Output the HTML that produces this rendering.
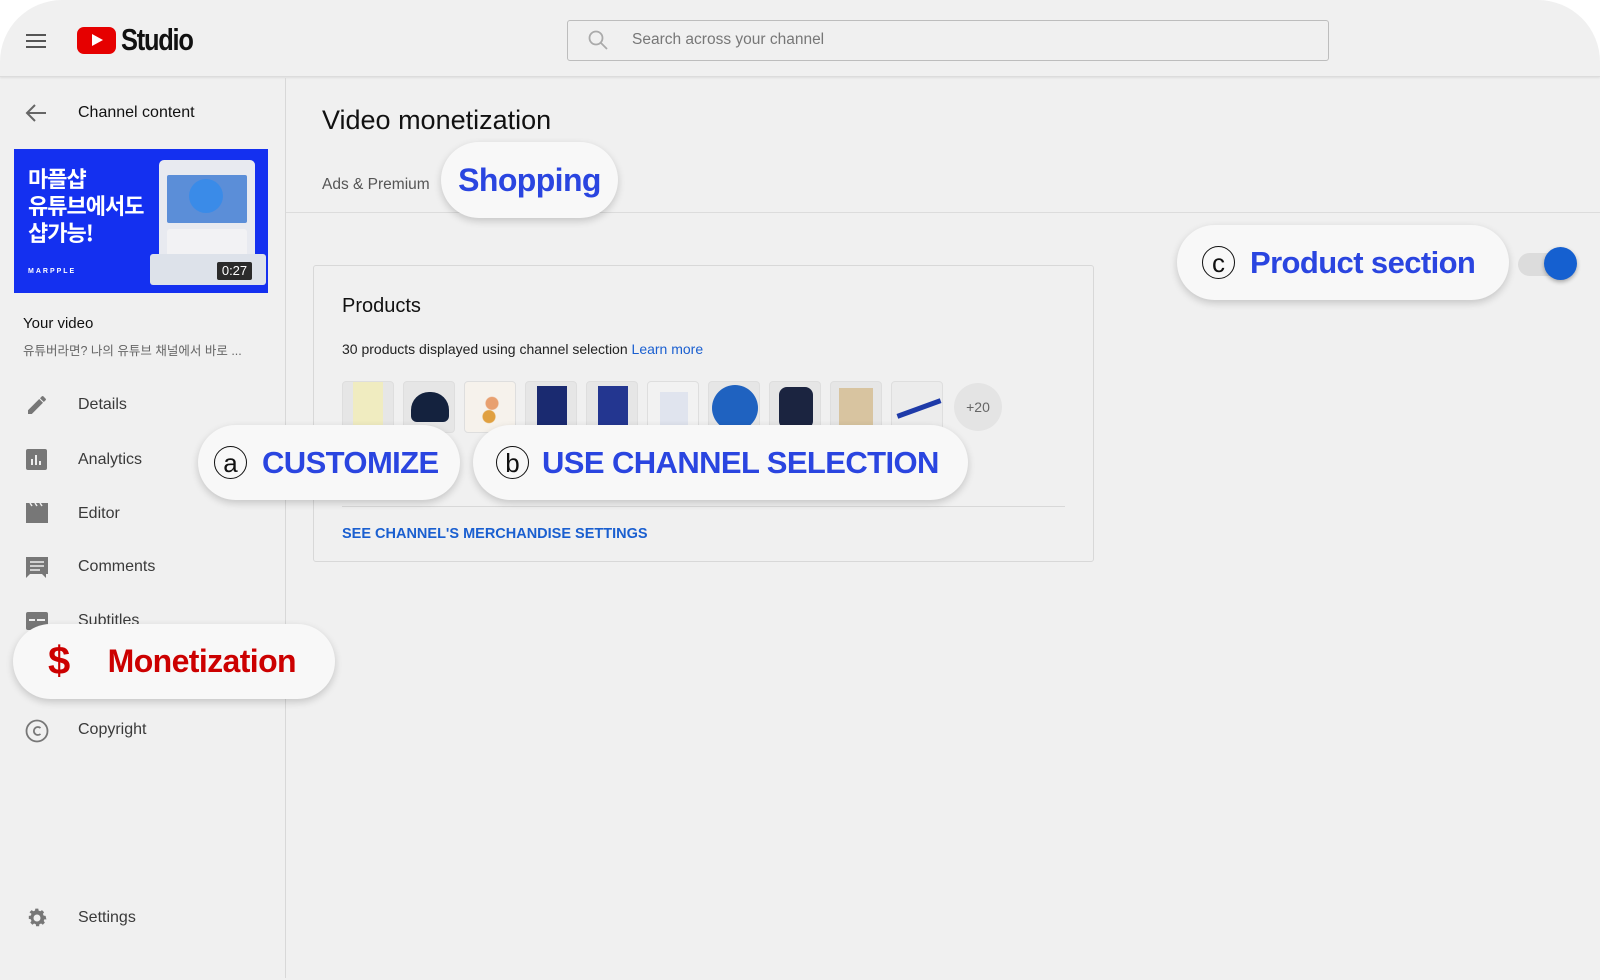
<!DOCTYPE html>
<html><head><meta charset="utf-8"><style>
*{margin:0;padding:0;box-sizing:border-box}
html,body{width:1600px;height:956px;overflow:hidden;background:#fff;font-family:"Liberation Sans","Noto Sans CJK KR",sans-serif}
#app{position:absolute;left:0;top:0;width:1600px;height:980px;background:#f0f0f0;border-radius:62px 62px 0 0;overflow:hidden}
.abs{position:absolute}
.hdr{left:0;top:0;width:1600px;height:77px;border-bottom:1px solid #dcdcdc;box-shadow:0 1px 2px rgba(0,0,0,.08)}
.side{left:285px;top:78px;width:1px;height:900px;background:#d8d8d8}
.nav{position:absolute;left:78px;font-size:16px;color:#3a3a3a}
.ico{position:absolute;left:25px}
.pill{position:absolute;background:#f8f8f8;border-radius:40px;box-shadow:0 3px 8px rgba(0,0,0,.18);display:flex;align-items:center;font-weight:bold;color:#2a45e0;white-space:nowrap;letter-spacing:-0.6px}
.circ{display:inline-flex;align-items:center;justify-content:center;border:1.6px solid #111;border-radius:50%;color:#111;font-weight:normal;letter-spacing:0}
.th{position:absolute;top:381px;width:52px;height:52px;background:#e6e6e6;border:1px solid #dedede;border-radius:4px;overflow:hidden}
</style></head><body><div id="app">
<div class="abs hdr"></div>
<div class="abs" style="left:26px;top:34px;width:20px;height:2px;background:#555;box-shadow:0 6px 0 #555,0 12px 0 #555"></div>
<div class="abs" style="left:77px;top:27px;width:39px;height:27px;background:#e60000;border-radius:7px"></div>
<div class="abs" style="left:92px;top:34px;width:0;height:0;border-left:11px solid #fff;border-top:6.5px solid transparent;border-bottom:6.5px solid transparent"></div>
<div class="abs" style="left:121px;top:22px;font-size:31px;font-weight:bold;letter-spacing:-1.5px;color:#111;transform:scaleX(.82);transform-origin:left">Studio</div>
<div class="abs" style="left:567px;top:20px;width:762px;height:41px;border:1px solid #bdbdbd;border-radius:3px"></div>
<svg class="abs" style="left:587px;top:29px" width="22" height="22" viewBox="0 0 22 22"><circle cx="9" cy="9" r="6.5" fill="none" stroke="#aaa" stroke-width="1.8"/><path d="M14 14l6 6" stroke="#aaa" stroke-width="1.8"/></svg>
<div class="abs" style="left:632px;top:31px;font-size:15.5px;color:#777">Search across your channel</div>
<div class="abs side"></div>
<svg class="abs" style="left:25px;top:103px" width="22" height="20" viewBox="0 0 22 20"><path d="M21 10H3M10 2L2 10l8 8" fill="none" stroke="#666" stroke-width="2"/></svg>
<div class="abs" style="left:78px;top:104px;font-size:16px;color:#111">Channel content</div>
<div class="abs" style="left:14px;top:149px;width:254px;height:144px;background:#1430f0;overflow:hidden">
 <div class="abs" style="left:14px;top:16px;font-size:22px;line-height:27px;font-weight:bold;color:#fff;font-family:'Noto Sans CJK KR',sans-serif;letter-spacing:-1px">마플샵<br>유튜브에서도<br>샵가능!</div>
 <div class="abs" style="left:14px;top:119px;font-size:7px;color:#fff;letter-spacing:2px;font-weight:bold">MARPPLE</div>
 <div class="abs" style="left:145px;top:11px;width:96px;height:122px;background:#e8eaf0;border-radius:5px"></div>
 <div class="abs" style="left:153px;top:26px;width:80px;height:48px;background:#5b8ed8;border-radius:2px"></div>
 <div class="abs" style="left:175px;top:30px;width:34px;height:34px;background:#3a8be8;border-radius:50%"></div>
 <div class="abs" style="left:153px;top:80px;width:80px;height:30px;background:#f2f2f4;border-radius:3px"></div>
 <div class="abs" style="left:136px;top:105px;width:116px;height:31px;background:#dde2ea;border-radius:3px"></div>
 <div class="abs" style="left:203px;top:113px;width:35px;height:18px;background:#2b2b2b;border-radius:2px;color:#fff;font-size:13px;text-align:center;line-height:18px">0:27</div>
</div>
<div class="abs" style="left:23px;top:315px;font-size:15px;color:#111">Your video</div>
<div class="abs" style="left:23px;top:340px;font-size:12.5px;color:#666">유튜버라면? 나의 유튜브 채널에서 바로 ...</div>
<svg class="ico" style="top:393px" width="24" height="24" viewBox="0 0 24 24"><path d="M3 17.2V21h3.8L18 9.8 14.2 6zM20.7 7.1a1 1 0 000-1.4l-2.4-2.4a1 1 0 00-1.4 0L15 5.2 18.8 9z" fill="#777"/></svg>
<div class="nav" style="top:396px">Details</div>
<svg class="ico" style="top:448px" width="24" height="24" viewBox="0 0 24 24"><rect x="1" y="1" width="21" height="21" rx="2" fill="#777"/><path d="M7 17V11M11 17V7M15 17v-4" stroke="#eee" stroke-width="2"/></svg>
<div class="nav" style="top:451px">Analytics</div>
<svg class="ico" style="top:502px" width="24" height="22" viewBox="0 0 24 22"><path d="M1 4h22v17H1z" fill="#777"/><path d="M1 1h22v3H1z" fill="#777"/><path d="M5 1l2 3M10 1l2 3M15 1l2 3" stroke="#eee" stroke-width="1.5"/></svg>
<div class="nav" style="top:505px">Editor</div>
<svg class="ico" style="top:556px" width="24" height="24" viewBox="0 0 24 24"><path d="M1 1h22v17H5l-4 4zM21 18v4l-4-4" fill="#777"/><path d="M5 6h14M5 10h14M5 14h10" stroke="#eee" stroke-width="1.6"/></svg>
<div class="nav" style="top:558px">Comments</div>
<svg class="ico" style="top:611px" width="24" height="20" viewBox="0 0 24 20"><rect x="1" y="1" width="22" height="18" rx="2" fill="#777"/><path d="M4 9h6M12 9h8" stroke="#eee" stroke-width="2"/></svg>
<div class="nav" style="top:612px">Subtitles</div>
<svg class="ico" style="top:719px" width="24" height="24" viewBox="0 0 24 24"><circle cx="12" cy="12" r="10.5" fill="none" stroke="#777" stroke-width="1.8"/><path d="M15.5 9a4 4 0 100 6" fill="none" stroke="#777" stroke-width="1.8"/></svg>
<div class="nav" style="top:721px">Copyright</div>
<svg class="ico" style="top:906px" width="24" height="24" viewBox="0 0 24 24"><path d="M12 8.5a3.5 3.5 0 100 7 3.5 3.5 0 000-7zm9.4 5l-2-.3a7.6 7.6 0 01-.7 1.7l1.2 1.7-2.1 2.1-1.7-1.2a7.6 7.6 0 01-1.7.7l-.3 2h-3l-.3-2a7.6 7.6 0 01-1.7-.7l-1.7 1.2-2.1-2.1 1.2-1.7a7.6 7.6 0 01-.7-1.7l-2-.3v-3l2-.3a7.6 7.6 0 01.7-1.7L4.5 6.2l2.1-2.1 1.7 1.2a7.6 7.6 0 011.7-.7l.3-2h3l.3 2a7.6 7.6 0 011.7.7l1.7-1.2 2.1 2.1-1.2 1.7a7.6 7.6 0 01.7 1.7l2 .3z" fill="#777"/></svg>
<div class="nav" style="top:909px">Settings</div>
<div class="pill" style="left:13px;top:624px;width:322px;height:75px;color:#cc0000;font-size:32px"><span style="margin-left:35px;font-size:40px;font-weight:bold">$</span><span style="margin-left:38px">Monetization</span></div>
<div class="abs" style="left:322px;top:105px;font-size:27px;color:#111">Video monetization</div>
<div class="abs" style="left:322px;top:176px;font-size:15.5px;color:#555">Ads &amp; Premium</div>
<div class="abs" style="left:286px;top:212px;width:1314px;height:1px;background:#dcdcdc"></div>
<div class="pill" style="left:441px;top:142px;width:177px;height:76px;font-size:32px;justify-content:center">Shopping</div>
<div class="abs" style="left:313px;top:265px;width:781px;height:297px;border:1px solid #d8d8d8;border-radius:3px"></div>
<div class="abs" style="left:342px;top:295px;font-size:20px;color:#111">Products</div>
<div class="abs" style="left:342px;top:341px;font-size:14px;color:#222">30 products displayed using channel selection <span style="color:#1a5fd0">Learn more</span></div>
<div class="th" style="left:342px"><div class="abs" style="left:10px;top:0;width:30px;height:52px;background:#f0ecc0"></div></div>
<div class="th" style="left:403px"><div class="abs" style="left:7px;top:10px;width:38px;height:30px;background:#14223e;border-radius:18px 18px 6px 6px"></div></div>
<div class="th" style="left:464px;background:#f6f2ec"><div class="abs" style="left:12px;top:8px;width:30px;height:38px;background:radial-gradient(circle at 50% 35%,#e8a070 6px,transparent 7px),radial-gradient(circle at 40% 70%,#e0a040 6px,transparent 7px)"></div></div>
<div class="th" style="left:525px"><div class="abs" style="left:11px;top:4px;width:30px;height:48px;background:#1a2a70"></div></div>
<div class="th" style="left:586px"><div class="abs" style="left:11px;top:4px;width:30px;height:48px;background:#233690"></div></div>
<div class="th" style="left:647px;background:#f2f2f2"><div class="abs" style="left:12px;top:10px;width:28px;height:36px;background:#e0e4ee"></div></div>
<div class="th" style="left:708px"><div class="abs" style="left:3px;top:3px;width:46px;height:46px;background:#1f62c0;border-radius:50%"></div></div>
<div class="th" style="left:769px"><div class="abs" style="left:9px;top:5px;width:34px;height:42px;background:#1b2440;border-radius:8px"></div></div>
<div class="th" style="left:830px"><div class="abs" style="left:8px;top:6px;width:34px;height:44px;background:#d8c4a0"></div></div>
<div class="th" style="left:891px;background:#ececec"><div class="abs" style="left:4px;top:24px;width:46px;height:5px;background:#1e3aa8;transform:rotate(-20deg)"></div></div>
<div class="abs" style="left:954px;top:383px;width:48px;height:48px;border-radius:50%;background:#e4e4e4;color:#666;font-size:14px;text-align:center;line-height:48px">+20</div>
<div class="abs" style="left:342px;top:506px;width:723px;height:1px;background:#d8d8d8"></div>
<div class="abs" style="left:342px;top:526px;font-size:14.5px;color:#1a5fd0;font-weight:bold">SEE CHANNEL'S MERCHANDISE SETTINGS</div>
<div class="pill" style="left:198px;top:425px;width:262px;height:75px;font-size:31px"><span class="circ" style="width:33px;height:33px;font-size:26px;margin-left:16px;line-height:1">a</span><span style="margin-left:15px">CUSTOMIZE</span></div>
<div class="pill" style="left:473px;top:425px;width:495px;height:75px;font-size:31px"><span class="circ" style="width:33px;height:33px;font-size:26px;margin-left:23px;line-height:1">b</span><span style="margin-left:13px">USE CHANNEL SELECTION</span></div>
<div class="abs" style="left:1518px;top:253px;width:50px;height:23px;border-radius:12px;background:#dcdcdc"></div>
<div class="abs" style="left:1544px;top:247px;width:33px;height:33px;border-radius:50%;background:#1560d0;box-shadow:0 2px 4px rgba(0,0,0,.3)"></div>
<div class="pill" style="left:1177px;top:225px;width:332px;height:75px;font-size:31px"><span class="circ" style="width:33px;height:33px;font-size:26px;margin-left:25px;line-height:1">c</span><span style="margin-left:15px">Product section</span></div>
</div></body></html>
